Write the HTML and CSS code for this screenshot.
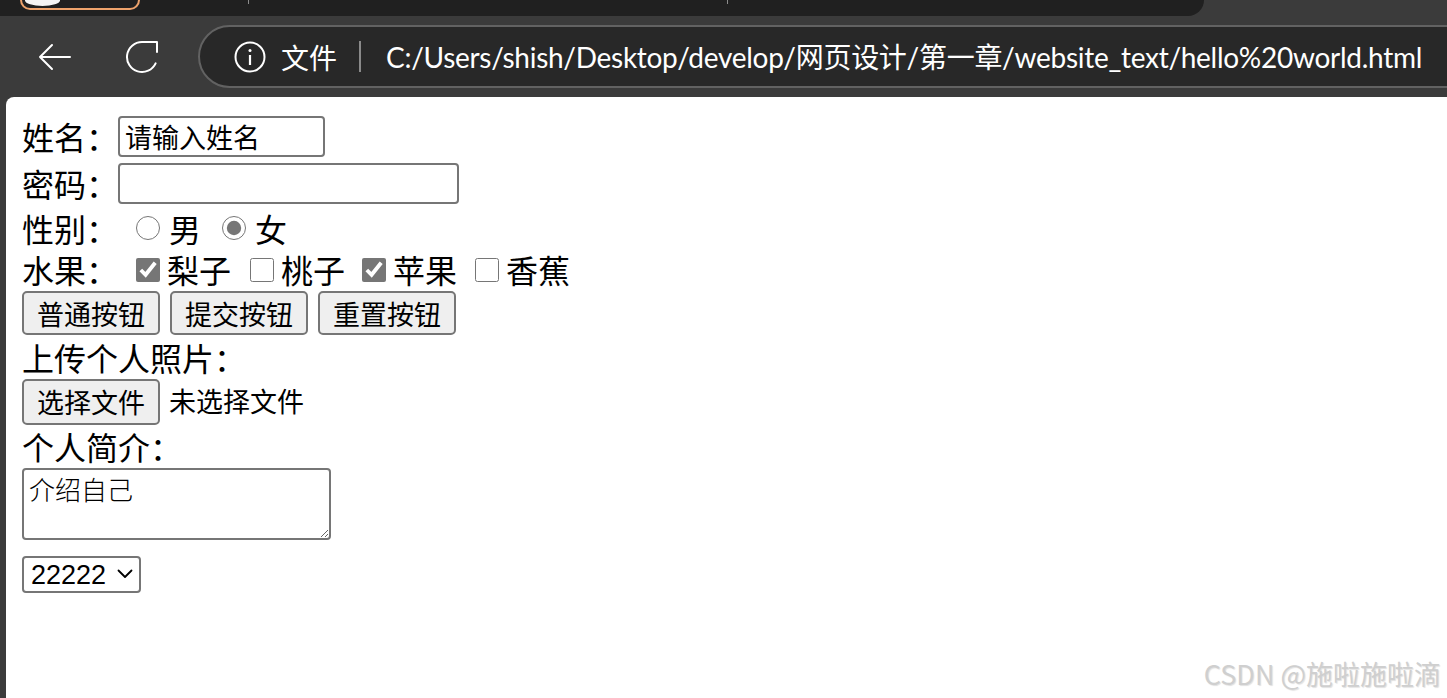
FILE: index.html
```html
<!DOCTYPE html>
<html lang="zh-CN">
<head>
<meta charset="utf-8">
<title>hello world</title>
<link rel="stylesheet" href="styles.css">
</head>
<body>
<div class="window">
  <div class="tabstrip">
    <div class="tabs">
      <div class="tab-active"><span class="favicon"></span></div>
      <span class="tabsep sep1"></span>
      <span class="tabsep sep2"></span>
    </div>
  </div>
  <div class="toolbar">
    <svg class="nav back" viewBox="0 0 34 30" width="34" height="30">
      <path d="M33 15 H3 M15 3 L3 15 L15 27" fill="none" stroke="#fff" stroke-width="2" stroke-linecap="round" stroke-linejoin="round"/>
    </svg>
    <svg class="nav reload" viewBox="0 0 34 34" width="34" height="34">
      <path d="M30.6 23.3 A15 15 0 1 1 17 2 H32 V12" fill="none" stroke="#fff" stroke-width="2" stroke-linecap="round" stroke-linejoin="round"/>
    </svg>
    <div class="omnibox">
      <svg class="info" viewBox="0 0 32 32" width="32" height="32">
        <circle cx="16" cy="16" r="14.5" fill="none" stroke="#fff" stroke-width="2"/>
        <circle cx="16" cy="9.5" r="1.5" fill="#fff"/>
        <path d="M16 14 V24" stroke="#fff" stroke-width="2.2"/>
      </svg>
      <span class="scheme">文件</span>
      <span class="divider"></span>
      <span class="url">C:/Users/shish/Desktop/develop/网页设计/第一章/website_text/hello%20world.html</span>
    </div>
  </div>
  <div class="page">
    <form class="form">
      <div class="row r1">
        <span class="label">姓名：</span>
        <input class="field name" type="text" value="请输入姓名">
      </div>
      <div class="row r2">
        <span class="label">密码：</span>
        <input class="field pwd" type="password">
      </div>
      <div class="row r3">
        <span class="label">性别：</span>
        <input class="choice radio first" type="radio" name="sex">
        <span class="opt">男</span>
        <input class="choice radio next" type="radio" name="sex" checked>
        <span class="opt">女</span>
      </div>
      <div class="row r4">
        <span class="label">水果：</span>
        <input class="choice check first" type="checkbox" checked>
        <span class="opt">梨子</span>
        <input class="choice check c2" type="checkbox">
        <span class="opt">桃子</span>
        <input class="choice check c3" type="checkbox" checked>
        <span class="opt">苹果</span>
        <input class="choice check c4" type="checkbox">
        <span class="opt">香蕉</span>
      </div>
      <div class="row r5">
        <button class="btn" type="button">普通按钮</button>
        <button class="btn" type="button">提交按钮</button>
        <button class="btn" type="button">重置按钮</button>
      </div>
      <div class="row r6">
        <span class="label">上传个人照片：</span>
      </div>
      <div class="row r7">
        <button class="btn filebtn" type="button">选择文件</button>
        <span class="nofile">未选择文件</span>
      </div>
      <div class="row r8">
        <span class="label">个人简介：</span>
      </div>
      <div class="row r9">
        <textarea class="intro">介绍自己</textarea>
      </div>
      <div class="row r10">
        <span class="selectwrap">
          <select class="sel"><option>22222</option></select>
          <svg class="chev" viewBox="0 0 16 10" width="16" height="10">
            <path d="M1.5 1.5 L8 8 L14.5 1.5" fill="none" stroke="#000" stroke-width="1.8" stroke-linecap="round" stroke-linejoin="round"/>
          </svg>
        </span>
      </div>
    </form>
    <div class="watermark">CSDN @施啦施啦滴</div>
  </div>
</div>
</body>
</html>
```
FILE: styles.css
```css
* { box-sizing: border-box; }
html, body { margin: 0; padding: 0; }
body {
  width: 1447px;
  height: 698px;
  overflow: hidden;
  background: #3b3b3b;
  font-family: "Noto Sans CJK SC", "Noto Sans", sans-serif;
}
.window {
  display: flex;
  flex-direction: column;
  width: 1447px;
  height: 698px;
}

/* tab strip */
.tabstrip {
  height: 16px;
  flex-shrink: 0;
  background: #3b3b3b;
}
.tabs {
  width: 1204px;
  height: 16px;
  background: #202020;
  border-bottom-right-radius: 16px;
  display: flex;
  align-items: flex-start;
}
.tab-active {
  margin-left: 20px;
  width: 120px;
  height: 10px;
  border: 2px solid #eea36c;
  border-top: none;
  border-radius: 0 0 12px 12px;
  background: #202020;
  padding-left: 3px;
}
.favicon {
  display: block;
  width: 35px;
  height: 6px;
  background: #f4f4f4;
  border-radius: 0 0 18px 18px / 0 0 6px 6px;
}
.tabsep {
  width: 1px;
  height: 4px;
  background: #8c8c8c;
}
.sep1 { margin-left: 108px; }
.sep2 { margin-left: 478px; }

/* toolbar */
.toolbar {
  height: 81px;
  flex-shrink: 0;
  display: flex;
  align-items: center;
  overflow: hidden;
  background: #3b3b3b;
}
.nav { flex-shrink: 0; display: block; }
.back { margin-left: 37px; }
.reload { margin-left: 54px; }
.omnibox {
  flex-shrink: 0;
  margin-left: 39px;
  width: 1320px;
  height: 63px;
  border: 2px solid #626262;
  border-radius: 32px 0 0 32px;
  background: #282828;
  display: flex;
  align-items: center;
  color: #fff;
}
.info { margin-left: 34px; flex-shrink: 0; }
.scheme {
  margin-left: 15px;
  font-size: 28px;
  line-height: 1;
  font-family: "Noto Sans CJK SC", sans-serif;
}
.divider {
  margin-left: 22px;
  width: 2px;
  height: 31px;
  background: #8a8a8a;
}
.url {
  margin-left: 25px;
  font-family: "Lato", "Noto Sans CJK SC", sans-serif;
  font-size: 28px;
  letter-spacing: -0.28px;
  line-height: 1;
  white-space: nowrap;
  color: #fff;
}

/* page */
.page {
  flex: 1;
  margin-left: 6px;
  background: #fff;
  border-top-left-radius: 8px;
  position: relative;
  color: #000;
}
.form {
  display: flex;
  flex-direction: column;
  padding: 16px 0 0 16px;
}
.row {
  display: flex;
  align-items: center;
}
.r1, .r2 { height: 47px; }
.r3 { height: 42px; }
.r4 { height: 41px; }
.r5 { height: 46px; }
.r6 { height: 42px; }
.r7 { height: 47px; }
.r8 { height: 43px; }
.r10 { margin-top: 16px; }

.label, .opt {
  font-size: 32px;
  line-height: 1.2;
  white-space: nowrap;
}
.field {
  margin: 0;
  height: 41px;
  border: 2px solid #767676;
  border-radius: 4px;
  padding: 0 5px;
  font-family: "Noto Sans CJK SC", sans-serif;
  font-size: 27px;
  color: #000;
  background: #fff;
}
.name { width: 207px; }
.pwd { width: 341px; }

.choice {
  margin: 0;
  width: 24px;
  height: 24px;
  accent-color: #767676;
}
.radio.first { margin-left: 18px; }
.radio.next { margin-left: 21px; }
.radio + .opt { margin-left: 9px; }
.check.first { margin-left: 18px; }
.check.c2 { margin-left: 19px; }
.check.c3 { margin-left: 17px; }
.check.c4 { margin-left: 18px; }
.check + .opt { margin-left: 7px; }

.btn {
  margin: 0 10px 0 0;
  width: 138px;
  height: 44px;
  padding: 0;
  border: 2px solid #767676;
  border-radius: 5px;
  background: #efefef;
  color: #000;
  font-family: "Noto Sans CJK SC", sans-serif;
  font-size: 27px;
  line-height: 1;
}
.filebtn { height: 46px; margin-right: 0; }
.nofile {
  margin-left: 9px;
  font-size: 27px;
  line-height: 1.2;
}
.intro {
  display: block;
  margin: 0;
  width: 309px;
  height: 72px;
  border: 2px solid #767676;
  border-radius: 4px;
  padding: 3px 5px;
  font-family: "Noto Sans CJK SC", sans-serif;
  font-weight: 300;
  font-size: 26px;
  line-height: 1.2;
  color: #000;
}
.selectwrap {
  position: relative;
  display: block;
  width: 119px;
  height: 37px;
}
.sel {
  appearance: none;
  -webkit-appearance: none;
  width: 100%;
  height: 100%;
  margin: 0;
  border: 2px solid #767676;
  border-radius: 4px;
  background: #fff;
  padding: 0 0 0 7px;
  font-family: "Liberation Sans", Arial, sans-serif;
  font-size: 27px;
  color: #000;
}
.chev {
  position: absolute;
  left: 95px;
  top: 13px;
  pointer-events: none;
}
.watermark {
  position: absolute;
  right: 6px;
  bottom: 8px;
  font-family: "Noto Sans CJK SC", sans-serif;
  font-size: 27px;
  line-height: 1.2;
  color: #cfcfcf;
  text-shadow: 1px 1px 1px rgba(0, 0, 0, 0.12);
  white-space: nowrap;
}
```
